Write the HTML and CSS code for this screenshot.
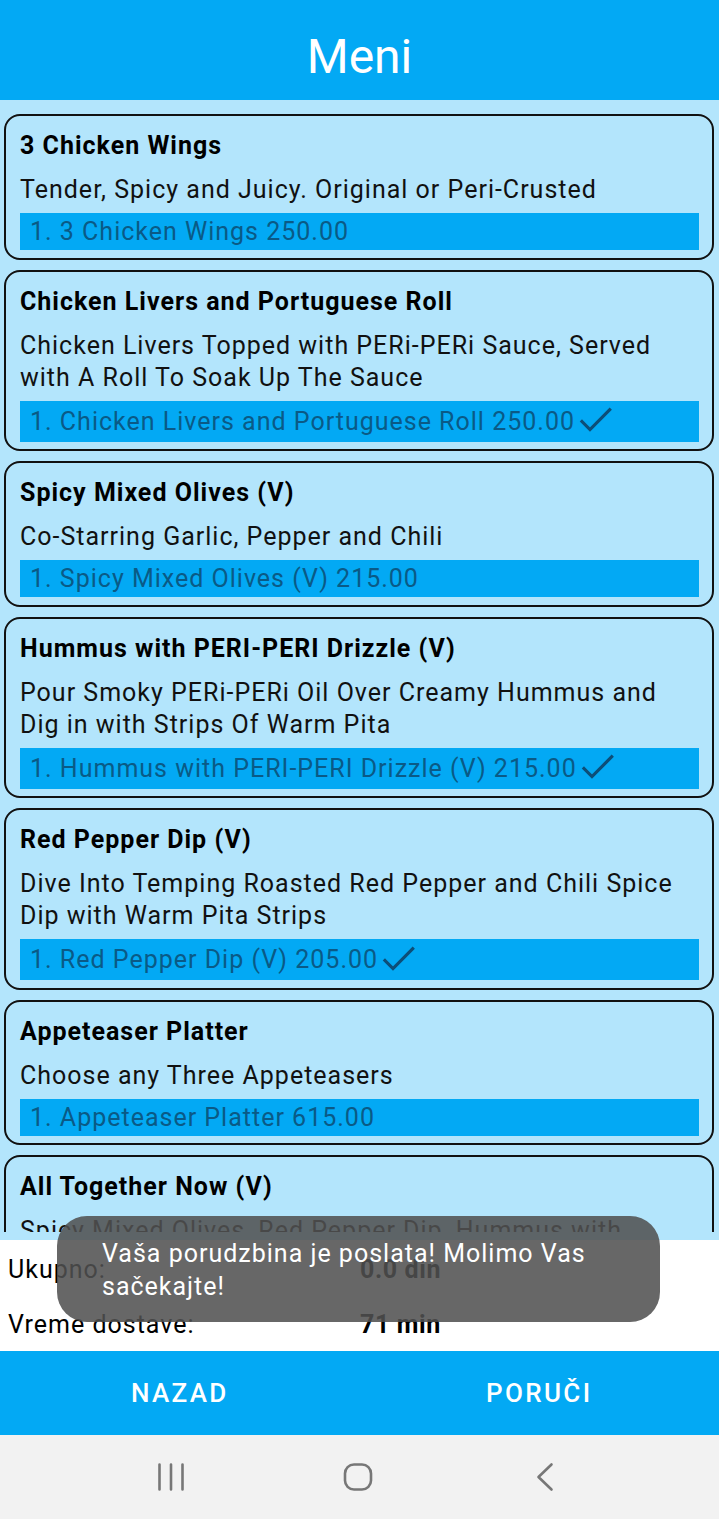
FILE: index.html
```html
<!DOCTYPE html>
<html lang="sr">
<head>
<meta charset="utf-8">
<title>Meni</title>
<link rel="stylesheet" href="styles.css">
</head>
<body>
<div class="app">
  <header class="topbar"><h1 class="topbar-title">Meni</h1></header>

  <main class="list-wrap">
    <div class="list">
      <section class="card">
        <h2 class="card-title">3 Chicken Wings</h2>
        <p class="card-desc">Tender, Spicy and Juicy. Original or Peri-Crusted</p>
        <div class="item-bar"><span>1. 3 Chicken Wings 250.00</span></div>
      </section>

      <section class="card">
        <h2 class="card-title">Chicken Livers and Portuguese Roll</h2>
        <p class="card-desc">Chicken Livers Topped with PERi-PERi Sauce, Served with A Roll To Soak Up The Sauce</p>
        <div class="item-bar checked"><span>1. Chicken Livers and Portuguese Roll 250.00</span><svg class="check" viewBox="0 0 24 24"><path d="M4.2 12.3l4.8 4.8L20.8 5.3"/></svg></div>
      </section>

      <section class="card">
        <h2 class="card-title">Spicy Mixed Olives (V)</h2>
        <p class="card-desc">Co-Starring Garlic, Pepper and Chili</p>
        <div class="item-bar"><span>1. Spicy Mixed Olives (V) 215.00</span></div>
      </section>

      <section class="card">
        <h2 class="card-title">Hummus with PERI-PERI Drizzle (V)</h2>
        <p class="card-desc">Pour Smoky PERi-PERi Oil Over Creamy Hummus and Dig in with Strips Of Warm Pita</p>
        <div class="item-bar checked"><span>1. Hummus with PERI-PERI Drizzle (V) 215.00</span><svg class="check" viewBox="0 0 24 24"><path d="M4.2 12.3l4.8 4.8L20.8 5.3"/></svg></div>
      </section>

      <section class="card">
        <h2 class="card-title">Red Pepper Dip (V)</h2>
        <p class="card-desc">Dive Into Temping Roasted Red Pepper and Chili Spice Dip with Warm Pita Strips</p>
        <div class="item-bar checked"><span>1. Red Pepper Dip (V) 205.00</span><svg class="check" viewBox="0 0 24 24"><path d="M4.2 12.3l4.8 4.8L20.8 5.3"/></svg></div>
      </section>

      <section class="card">
        <h2 class="card-title">Appeteaser Platter</h2>
        <p class="card-desc">Choose any Three Appeteasers</p>
        <div class="item-bar"><span>1. Appeteaser Platter 615.00</span></div>
      </section>

      <section class="card">
        <h2 class="card-title">All Together Now (V)</h2>
        <p class="card-desc">Spicy Mixed Olives, Red Pepper Dip, Hummus with <span class="nowrap">PERi-PERi</span> Drizzle and Warm Pita Strips</p>
        <div class="item-bar"><span>1. All Together Now (V) 615.00</span></div>
      </section>
    </div>
  </main>

  <section class="totals">
    <div class="totals-label">Ukupno:</div>
    <div class="totals-value">0.0 din</div>
    <div class="totals-label">Vreme dostave:</div>
    <div class="totals-value">71 min</div>
  </section>

  <nav class="actions">
    <button class="action-btn">NAZAD</button>
    <button class="action-btn">PORUČI</button>
  </nav>

  <footer class="sysnav">
    <svg class="sys-icon" viewBox="0 0 30 30"><path d="M3.5 2.5v25M15 2.5v25M26.5 2.5v25"/></svg>
    <svg class="sys-icon" viewBox="0 0 30 30"><rect x="2" y="2.5" width="26" height="25" rx="9"/></svg>
    <svg class="sys-icon" viewBox="0 0 30 30"><path d="M21.5 2.5L8.5 15l13 12.5"/></svg>
  </footer>

  <div class="toast">Vaša porudzbina je poslata! Molimo Vas sačekajte!</div>
</div>
</body>
</html>
```

FILE: styles.css
```css
* { box-sizing: border-box; }

html, body {
  margin: 0;
  padding: 0;
}

body {
  font-family: Roboto, "Noto Sans", "Liberation Sans", sans-serif;
  color: #111;
  background: #fff;
}

.app {
  position: relative;
  width: 719px;
  height: 1519px;
  display: flex;
  flex-direction: column;
  overflow: hidden;
}

.topbar {
  height: 100px;
  flex: none;
  background: #03a9f4;
  display: flex;
  align-items: center;
  justify-content: center;
}

.topbar-title {
  margin: 0;
  padding-top: 14px;
  font-size: 48px;
  font-weight: 400;
  color: #fff;
  line-height: 1;
}

.list-wrap {
  flex: 1;
  min-height: 0;
  background: #b3e5fc;
  padding-bottom: 8px;
  display: flex;
  flex-direction: column;
}

.list {
  flex: 1;
  min-height: 0;
  overflow: hidden;
  padding: 14px 5px 0 4px;
  display: flex;
  flex-direction: column;
  gap: 10px;
}

.card {
  flex: none;
  border: 2px solid #111;
  border-radius: 16px;
  padding: 15px 13px 7.5px 14px;
}

.card-title {
  margin: 0;
  font-size: 25px;
  line-height: 30px;
  font-weight: 700;
  letter-spacing: 1px;
  color: #000;
}

.card-desc {
  margin: 13px 0 0;
  font-size: 25px;
  line-height: 32px;
  letter-spacing: 1px;
  color: #111;
}

.nowrap {
  white-space: nowrap;
}

.item-bar {
  margin-top: 7px;
  min-height: 37px;
  background: #03a9f4;
  padding-left: 10px;
  display: flex;
  align-items: center;
  font-size: 25px;
  line-height: 37px;
  letter-spacing: 1px;
  color: #0a5a86;
}

.item-bar.checked {
  height: 41px;
}

.check {
  width: 40px;
  height: 40px;
  margin-left: 0;
  fill: none;
  stroke: #0d4e78;
  stroke-width: 1.9;
  stroke-linecap: square;
}

.totals {
  flex: none;
  height: 111px;
  display: grid;
  grid-template-columns: 352px 1fr;
  grid-auto-rows: 55px;
  padding: 2px 0 0 8px;
  align-items: center;
  font-size: 25px;
  letter-spacing: 1px;
  color: #000;
}

.totals-value {
  font-weight: 700;
  letter-spacing: 0.6px;
}

.actions {
  flex: none;
  height: 84px;
  background: #03a9f4;
  display: grid;
  grid-template-columns: 1fr 1fr;
}

.action-btn {
  border: 0;
  background: transparent;
  color: #fff;
  font-family: Roboto, "Noto Sans", sans-serif;
  font-size: 26px;
  font-weight: 500;
  letter-spacing: 0.09em;
  padding: 0;
}

.sysnav {
  flex: none;
  height: 84px;
  background: #f2f2f2;
  display: grid;
  grid-template-columns: 1fr 1fr 1fr;
  justify-items: center;
  align-items: center;
  padding: 0 81px 0 77px;
}

.sys-icon {
  width: 30px;
  height: 30px;
  fill: none;
  stroke: #777;
  stroke-width: 2.6;
  stroke-linecap: round;
  stroke-linejoin: round;
}

.toast {
  position: absolute;
  left: 57px;
  top: 1216px;
  width: 603px;
  height: 106px;
  border-radius: 30px;
  background: rgba(80, 80, 80, 0.87);
  color: #fff;
  font-size: 25px;
  line-height: 33px;
  letter-spacing: 1px;
  padding: 21px 40px 0 45px;
}
```
